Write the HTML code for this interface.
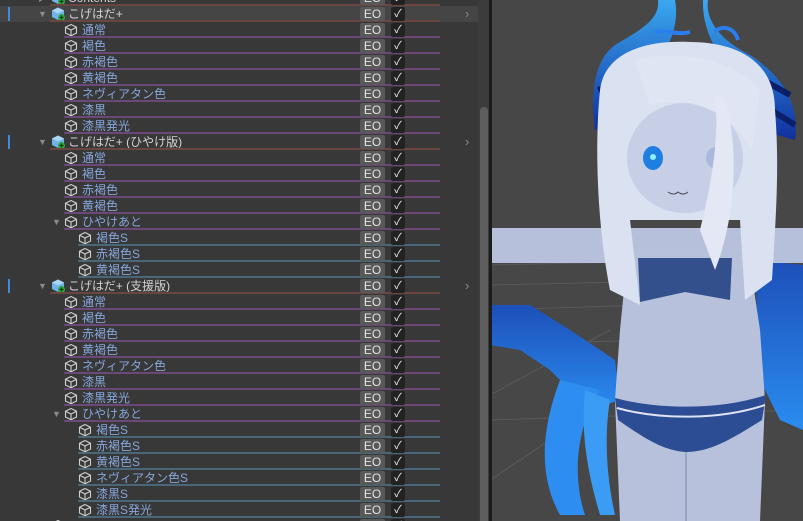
<!DOCTYPE html><html><head><meta charset="utf-8"><style>
*{margin:0;padding:0;box-sizing:border-box}
html,body{width:803px;height:521px;overflow:hidden}
body{background:#383838;font-family:"Liberation Sans","Noto Sans CJK JP",sans-serif;font-size:12px}
#w{position:relative;width:803px;height:521px;overflow:hidden}
.r{position:absolute;left:0;width:478px;height:16px}
.r.sel{background:#454545}
.t{position:absolute;top:0;line-height:16px;color:#86a6dc;white-space:nowrap}
.h .t{color:#d2d2d2}
.ic{position:absolute;top:1px;width:14px;height:14px}
.ln{position:absolute;top:14px;height:2px;right:38px}
.lp{background:#6b4878}.lb{background:#4a6779}.lr{background:#6a4542}
.eo{position:absolute;left:360px;top:1px;width:25px;height:14px;background:#585858;border-radius:2px;color:#e4e4e4;font-size:12px;line-height:14px;text-align:center}
.cb{position:absolute;left:391px;top:1px;width:14px;height:14px;background:#222;border-radius:2px;color:#eee;font-size:11px;line-height:14px;text-align:center}
.ar{position:absolute;top:0;color:#8a8a8a;font-size:9px;line-height:16px}
.bar{position:absolute;left:8px;top:1px;width:2px;height:14px;background:#3a8ed8}
.gt{position:absolute;left:465px;top:0;color:#8a8a8a;font-size:13px;line-height:16px}
</style></head><body><div id="w">
<svg width="0" height="0" style="position:absolute"><defs>
<g id="c"><path d="M7 1.5 L12.5 4.2 V10 L7 12.7 L1.5 10 V4.2 Z M1.5 4.2 L7 7 L12.5 4.2 M7 7 V12.7" fill="none" stroke="#cfcfcf" stroke-width="1.1"/></g>
<g id="hc"><path d="M7 0.5 L13 3.5 V10 L7 13 L1 10 V3.5 Z" fill="#6fb4e6"/><path d="M1 3.5 L7 6.5 L13 3.5 L7 0.5Z" fill="#a8d6f4"/><circle cx="10.5" cy="10.5" r="3.5" fill="#2faa3e"/><path d="M10.5 8.5V12.5M8.5 10.5H12.5" stroke="#0c3a10" stroke-width="1.2"/></g>
</defs></svg>

<div class="r h" style="top:-10px"><span class="ar" style="left:38px">▶</span><svg class="ic" style="left:51px"><use href="#hc"/></svg><span class="t" style="left:68px">Contents</span><div class="ln lr" style="left:50px"></div><div class="eo">EO</div><div class="cb">✓</div></div>

<div class="r h sel" style="top:6px"><div class="bar"></div><span class="ar" style="left:38px">▼</span><svg class="ic" style="left:51px"><use href="#hc"/></svg><span class="t" style="left:68px">こげはだ+</span><div class="ln lr" style="left:50px"></div><div class="eo">EO</div><div class="cb">✓</div><span class="gt">›</span></div>
<div class="r" style="top:22px"><svg class="ic" style="left:64px"><use href="#c"/></svg><span class="t" style="left:82px">通常</span><div class="ln lp" style="left:64px"></div><div class="eo">EO</div><div class="cb">✓</div></div>
<div class="r" style="top:38px"><svg class="ic" style="left:64px"><use href="#c"/></svg><span class="t" style="left:82px">褐色</span><div class="ln lp" style="left:64px"></div><div class="eo">EO</div><div class="cb">✓</div></div>
<div class="r" style="top:54px"><svg class="ic" style="left:64px"><use href="#c"/></svg><span class="t" style="left:82px">赤褐色</span><div class="ln lp" style="left:64px"></div><div class="eo">EO</div><div class="cb">✓</div></div>
<div class="r" style="top:70px"><svg class="ic" style="left:64px"><use href="#c"/></svg><span class="t" style="left:82px">黄褐色</span><div class="ln lp" style="left:64px"></div><div class="eo">EO</div><div class="cb">✓</div></div>
<div class="r" style="top:86px"><svg class="ic" style="left:64px"><use href="#c"/></svg><span class="t" style="left:82px">ネヴィアタン色</span><div class="ln lp" style="left:64px"></div><div class="eo">EO</div><div class="cb">✓</div></div>
<div class="r" style="top:102px"><svg class="ic" style="left:64px"><use href="#c"/></svg><span class="t" style="left:82px">漆黒</span><div class="ln lp" style="left:64px"></div><div class="eo">EO</div><div class="cb">✓</div></div>
<div class="r" style="top:118px"><svg class="ic" style="left:64px"><use href="#c"/></svg><span class="t" style="left:82px">漆黒発光</span><div class="ln lp" style="left:64px"></div><div class="eo">EO</div><div class="cb">✓</div></div>

<div class="r h" style="top:134px"><div class="bar"></div><span class="ar" style="left:38px">▼</span><svg class="ic" style="left:51px"><use href="#hc"/></svg><span class="t" style="left:68px">こげはだ+ (ひやけ版)</span><div class="ln lr" style="left:50px"></div><div class="eo">EO</div><div class="cb">✓</div><span class="gt">›</span></div>
<div class="r" style="top:150px"><svg class="ic" style="left:64px"><use href="#c"/></svg><span class="t" style="left:82px">通常</span><div class="ln lp" style="left:64px"></div><div class="eo">EO</div><div class="cb">✓</div></div>
<div class="r" style="top:166px"><svg class="ic" style="left:64px"><use href="#c"/></svg><span class="t" style="left:82px">褐色</span><div class="ln lp" style="left:64px"></div><div class="eo">EO</div><div class="cb">✓</div></div>
<div class="r" style="top:182px"><svg class="ic" style="left:64px"><use href="#c"/></svg><span class="t" style="left:82px">赤褐色</span><div class="ln lp" style="left:64px"></div><div class="eo">EO</div><div class="cb">✓</div></div>
<div class="r" style="top:198px"><svg class="ic" style="left:64px"><use href="#c"/></svg><span class="t" style="left:82px">黄褐色</span><div class="ln lp" style="left:64px"></div><div class="eo">EO</div><div class="cb">✓</div></div>
<div class="r" style="top:214px"><span class="ar" style="left:52px">▼</span><svg class="ic" style="left:64px"><use href="#c"/></svg><span class="t" style="left:82px">ひやけあと</span><div class="ln lp" style="left:64px"></div><div class="eo">EO</div><div class="cb">✓</div></div>
<div class="r" style="top:230px"><svg class="ic" style="left:78px"><use href="#c"/></svg><span class="t" style="left:96px">褐色S</span><div class="ln lb" style="left:78px"></div><div class="eo">EO</div><div class="cb">✓</div></div>
<div class="r" style="top:246px"><svg class="ic" style="left:78px"><use href="#c"/></svg><span class="t" style="left:96px">赤褐色S</span><div class="ln lb" style="left:78px"></div><div class="eo">EO</div><div class="cb">✓</div></div>
<div class="r" style="top:262px"><svg class="ic" style="left:78px"><use href="#c"/></svg><span class="t" style="left:96px">黄褐色S</span><div class="ln lb" style="left:78px"></div><div class="eo">EO</div><div class="cb">✓</div></div>

<div class="r h" style="top:278px"><div class="bar"></div><span class="ar" style="left:38px">▼</span><svg class="ic" style="left:51px"><use href="#hc"/></svg><span class="t" style="left:68px">こげはだ+ (支援版)</span><div class="ln lr" style="left:50px"></div><div class="eo">EO</div><div class="cb">✓</div><span class="gt">›</span></div>
<div class="r" style="top:294px"><svg class="ic" style="left:64px"><use href="#c"/></svg><span class="t" style="left:82px">通常</span><div class="ln lp" style="left:64px"></div><div class="eo">EO</div><div class="cb">✓</div></div>
<div class="r" style="top:310px"><svg class="ic" style="left:64px"><use href="#c"/></svg><span class="t" style="left:82px">褐色</span><div class="ln lp" style="left:64px"></div><div class="eo">EO</div><div class="cb">✓</div></div>
<div class="r" style="top:326px"><svg class="ic" style="left:64px"><use href="#c"/></svg><span class="t" style="left:82px">赤褐色</span><div class="ln lp" style="left:64px"></div><div class="eo">EO</div><div class="cb">✓</div></div>
<div class="r" style="top:342px"><svg class="ic" style="left:64px"><use href="#c"/></svg><span class="t" style="left:82px">黄褐色</span><div class="ln lp" style="left:64px"></div><div class="eo">EO</div><div class="cb">✓</div></div>
<div class="r" style="top:358px"><svg class="ic" style="left:64px"><use href="#c"/></svg><span class="t" style="left:82px">ネヴィアタン色</span><div class="ln lp" style="left:64px"></div><div class="eo">EO</div><div class="cb">✓</div></div>
<div class="r" style="top:374px"><svg class="ic" style="left:64px"><use href="#c"/></svg><span class="t" style="left:82px">漆黒</span><div class="ln lp" style="left:64px"></div><div class="eo">EO</div><div class="cb">✓</div></div>
<div class="r" style="top:390px"><svg class="ic" style="left:64px"><use href="#c"/></svg><span class="t" style="left:82px">漆黒発光</span><div class="ln lp" style="left:64px"></div><div class="eo">EO</div><div class="cb">✓</div></div>
<div class="r" style="top:406px"><span class="ar" style="left:52px">▼</span><svg class="ic" style="left:64px"><use href="#c"/></svg><span class="t" style="left:82px">ひやけあと</span><div class="ln lp" style="left:64px"></div><div class="eo">EO</div><div class="cb">✓</div></div>
<div class="r" style="top:422px"><svg class="ic" style="left:78px"><use href="#c"/></svg><span class="t" style="left:96px">褐色S</span><div class="ln lb" style="left:78px"></div><div class="eo">EO</div><div class="cb">✓</div></div>
<div class="r" style="top:438px"><svg class="ic" style="left:78px"><use href="#c"/></svg><span class="t" style="left:96px">赤褐色S</span><div class="ln lb" style="left:78px"></div><div class="eo">EO</div><div class="cb">✓</div></div>
<div class="r" style="top:454px"><svg class="ic" style="left:78px"><use href="#c"/></svg><span class="t" style="left:96px">黄褐色S</span><div class="ln lb" style="left:78px"></div><div class="eo">EO</div><div class="cb">✓</div></div>
<div class="r" style="top:470px"><svg class="ic" style="left:78px"><use href="#c"/></svg><span class="t" style="left:96px">ネヴィアタン色S</span><div class="ln lb" style="left:78px"></div><div class="eo">EO</div><div class="cb">✓</div></div>
<div class="r" style="top:486px"><svg class="ic" style="left:78px"><use href="#c"/></svg><span class="t" style="left:96px">漆黒S</span><div class="ln lb" style="left:78px"></div><div class="eo">EO</div><div class="cb">✓</div></div>
<div class="r" style="top:502px"><svg class="ic" style="left:78px"><use href="#c"/></svg><span class="t" style="left:96px">漆黒S発光</span><div class="ln lb" style="left:78px"></div><div class="eo">EO</div><div class="cb">✓</div></div>
<div class="r" style="top:518px;height:3px;overflow:hidden"><svg class="ic" style="left:51px"><use href="#c"/></svg><div class="eo">EO</div><div class="cb">✓</div></div>

<div style="position:absolute;left:478px;top:0;width:11px;height:521px;background:#3c3c3c"></div>
<div style="position:absolute;left:480px;top:107px;width:8px;height:414px;background:#5e5e5e;border-radius:4px 4px 0 0"></div>
<div style="position:absolute;left:489px;top:0;width:3px;height:521px;background:#1c1c1c"></div>

<svg style="position:absolute;left:492px;top:0" width="311" height="521" viewBox="2 0 311 521">
<defs>
<linearGradient id="bl" x1="0" y1="0" x2="0" y2="1"><stop offset="0" stop-color="#1d4fb8"/><stop offset="1" stop-color="#2a8cf0"/></linearGradient>
<linearGradient id="hn" x1="0" y1="0" x2="0" y2="1"><stop offset="0" stop-color="#3aa8f0"/><stop offset="1" stop-color="#1030a0"/></linearGradient>
</defs>
<rect x="0" y="0" width="313" height="521" fill="#474747"/>
<g stroke="#5a5a5a" stroke-width="1" fill="none">
<path d="M0 265 L313 258 M0 285 L313 278 M0 310 L313 300 M0 345 L313 335 M0 420 L313 410 M0 395 L120 330 M0 480 L150 380 M313 345 L260 300"/>
</g>
<path d="M168 0 C170 20 150 30 125 45 C105 60 100 90 105 130 L140 120 C135 90 145 70 175 50 C185 35 188 15 185 0Z" fill="url(#hn)"/>
<path d="M218 0 C215 20 230 40 260 55 C290 75 310 100 305 140 L270 130 C275 100 255 80 235 60 C220 45 212 20 213 0Z" fill="url(#hn)"/>
<path d="M108 90 L150 75 M112 110 L150 98 M255 70 L300 95 M265 100 L305 125" stroke="#0a1e6a" stroke-width="6"/>
<path d="M0 305 L40 305 L80 330 L125 360 L130 400 L100 410 L60 370 L30 350 L0 345Z" fill="url(#bl)"/>
<path d="M265 260 L313 265 L313 430 L290 420 L270 380Z" fill="url(#bl)"/>
<path d="M70 380 C55 420 45 470 70 515 L95 515 C80 470 90 420 110 390Z" fill="#2d8df0"/>
<path d="M95 390 C90 440 100 480 110 515 L125 515 C115 470 115 430 120 400Z" fill="#3a9cf5"/>
<rect x="0" y="228" width="313" height="35" fill="#b6c0da"/>
<path d="M138 250 L258 250 L270 330 L275 400 L270 521 L130 521 L125 400 L130 330Z" fill="#b7c1dc"/>
<path d="M196 440 L196 521" stroke="#9aa6c4" stroke-width="2"/>
<path d="M148 258 L242 258 L240 300 L195 292 L150 302Z" fill="#34508c"/>
<path d="M125 398 C170 410 230 410 276 395 L272 420 C240 440 220 452 195 452 C170 450 150 435 128 420Z" fill="#2c4c94"/>
<path d="M127 408 C170 420 230 420 275 405" stroke="#dde3f0" stroke-width="2" fill="none"/>
<path d="M110 90 C115 50 160 40 200 42 C245 42 285 60 285 110 C290 170 285 230 282 280 L255 300 L250 220 L140 220 L150 305 L120 290 C108 230 104 150 110 90Z" fill="#dae1f0"/>
<ellipse cx="195" cy="158" rx="58" ry="55" fill="#c7cfe6"/>
<path d="M145 60 C180 50 240 55 270 90 L262 150 C240 110 200 95 160 105 Z" fill="#dfe5f3"/>
<path d="M165 33 C175 28 185 36 200 32 M225 32 C232 24 245 28 248 40" stroke="#2a7ef0" stroke-width="4" fill="none"/>
<ellipse cx="163" cy="158" rx="10" ry="12" fill="#1e7fe0"/><circle cx="163" cy="157" r="3" fill="#8cf0ff"/>
<ellipse cx="226" cy="158" rx="10" ry="11" fill="#a9b8dc"/>
<path d="M178 192 q6 4 10 0 q5 4 10 0" stroke="#445" fill="none"/>
<path d="M225 95 C230 140 220 190 210 230 L225 270 C245 220 250 150 235 100Z" fill="#e3e8f4"/>
</svg>
</div></body></html>
